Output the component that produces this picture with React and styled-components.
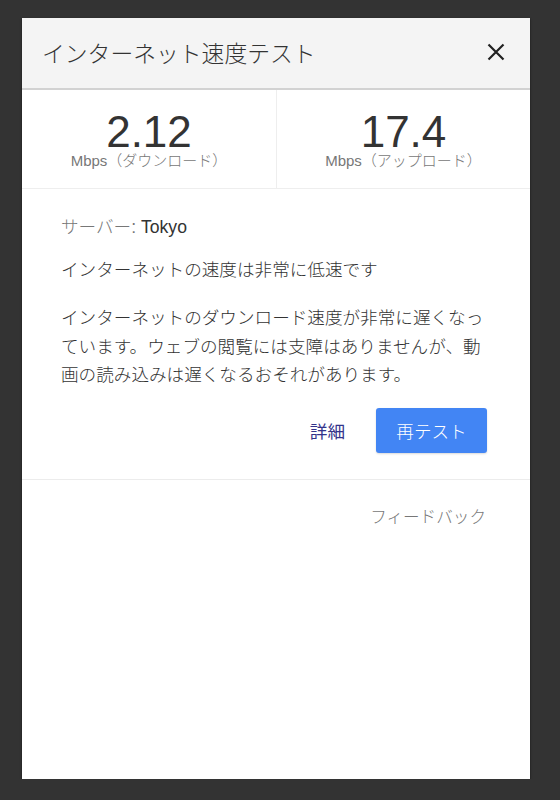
import React from "react";
import styled, { createGlobalStyle } from "styled-components";

const GlobalStyle = createGlobalStyle`
  html, body {
    margin: 0;
    padding: 0;
    background: #333333;
  }
  body {
    font-family: "Liberation Sans", "Noto Sans CJK JP", sans-serif;
  }
`;

export default function App() {
  return (
    <>
      <GlobalStyle />
      <Panel>
        <Header>
          <Title>インターネット速度テスト</Title>
          <CloseButton aria-label="閉じる">
            <svg width="18" height="18" viewBox="0 0 18 18">
              <path
                d="M1.5 1.5 L16.5 16.5 M16.5 1.5 L1.5 16.5"
                stroke="#222"
                strokeWidth="2.2"
                fill="none"
              />
            </svg>
          </CloseButton>
        </Header>
        <Stats>
          <Stat>
            <Value>2.12</Value>
            <Unit>Mbps（ダウンロード）</Unit>
          </Stat>
          <Stat>
            <Value>17.4</Value>
            <Unit>Mbps（アップロード）</Unit>
          </Stat>
        </Stats>
        <Body>
          <Server>
            <Muted>サーバー:</Muted> Tokyo
          </Server>
          <Summary>インターネットの速度は非常に低速です</Summary>
          <Text>
            インターネットのダウンロード速度が非常に遅くなっています。ウェブの閲覧には支障はありませんが、動画の読み込みは遅くなるおそれがあります。
          </Text>
          <Actions>
            <LinkButton>詳細</LinkButton>
            <PrimaryButton>再テスト</PrimaryButton>
          </Actions>
        </Body>
        <Footer>
          <Feedback>フィードバック</Feedback>
        </Footer>
      </Panel>
    </>
  );
}

const Panel = styled.div`
  margin: 18px 0 0 22px;
  width: 508px;
  height: 761px;
  background: #fff;
  box-shadow: 0 1px 2px rgba(0, 0, 0, 0.6);
  display: flex;
  flex-direction: column;
`;

const Header = styled.div`
  height: 70px;
  background: #f4f4f4;
  border-bottom: 2px solid #d2d2d2;
  display: flex;
  align-items: center;
  justify-content: space-between;
  padding: 0 25px 0 20px;
`;

const Title = styled.h1`
  margin: 0;
  font-size: 22.8px;
  font-weight: 300;
  color: #333;
  line-height: 30px;
  padding-top: 2px;
`;

const CloseButton = styled.button`
  border: 0;
  background: none;
  padding: 0;
  width: 18px;
  height: 18px;
  display: flex;
  margin-top: -2px;
`;

const Stats = styled.div`
  display: grid;
  grid-template-columns: 1fr 1fr;
  height: 98px;
  border-bottom: 1px solid #eeeeee;
`;

const Stat = styled.div`
  display: flex;
  flex-direction: column;
  align-items: center;
  padding-top: 21px;
  & + & {
    border-left: 1px solid #eeeeee;
  }
`;

const Value = styled.div`
  font-size: 44px;
  line-height: 42px;
  color: #333;
`;

const Unit = styled.div`
  font-size: 15px;
  font-weight: 300;
  line-height: 16px;
  color: #777;
`;

const Body = styled.div`
  padding: 24px 43px 0 39px;
  font-size: 17.6px;
  font-weight: 300;
  line-height: 28.5px;
  color: #333;
`;

const Server = styled.p`
  margin: 0 0 14px;
`;

const Muted = styled.span`
  color: #777;
`;

const Summary = styled.p`
  margin: 0 0 20px;
`;

const Text = styled.p`
  margin: 0;
`;

const Actions = styled.div`
  display: flex;
  justify-content: flex-end;
  align-items: center;
  gap: 23px;
  margin-top: 18px;
  padding-bottom: 26px;
  border-bottom: 1px solid #ececec;
  margin-left: -39px;
  margin-right: -43px;
  padding-right: 43px;
`;

const LinkButton = styled.button`
  border: 0;
  background: none;
  font-family: inherit;
  font-size: 17.6px;
  font-weight: 400;
  color: #33338a;
  padding: 0 8px;
  height: 45px;
`;

const PrimaryButton = styled.button`
  border: 0;
  background: #4285f4;
  color: #fff;
  font-family: inherit;
  font-size: 17.6px;
  font-weight: 300;
  width: 111px;
  height: 45px;
  border-radius: 3px;
  box-shadow: 0 1px 2px rgba(0, 0, 0, 0.15);
`;

const Footer = styled.div`
  display: flex;
  justify-content: flex-end;
  padding: 24px 44px 0 0;
`;

const Feedback = styled.span`
  font-size: 16.6px;
  font-weight: 300;
  line-height: 28px;
  color: #777;
`;
